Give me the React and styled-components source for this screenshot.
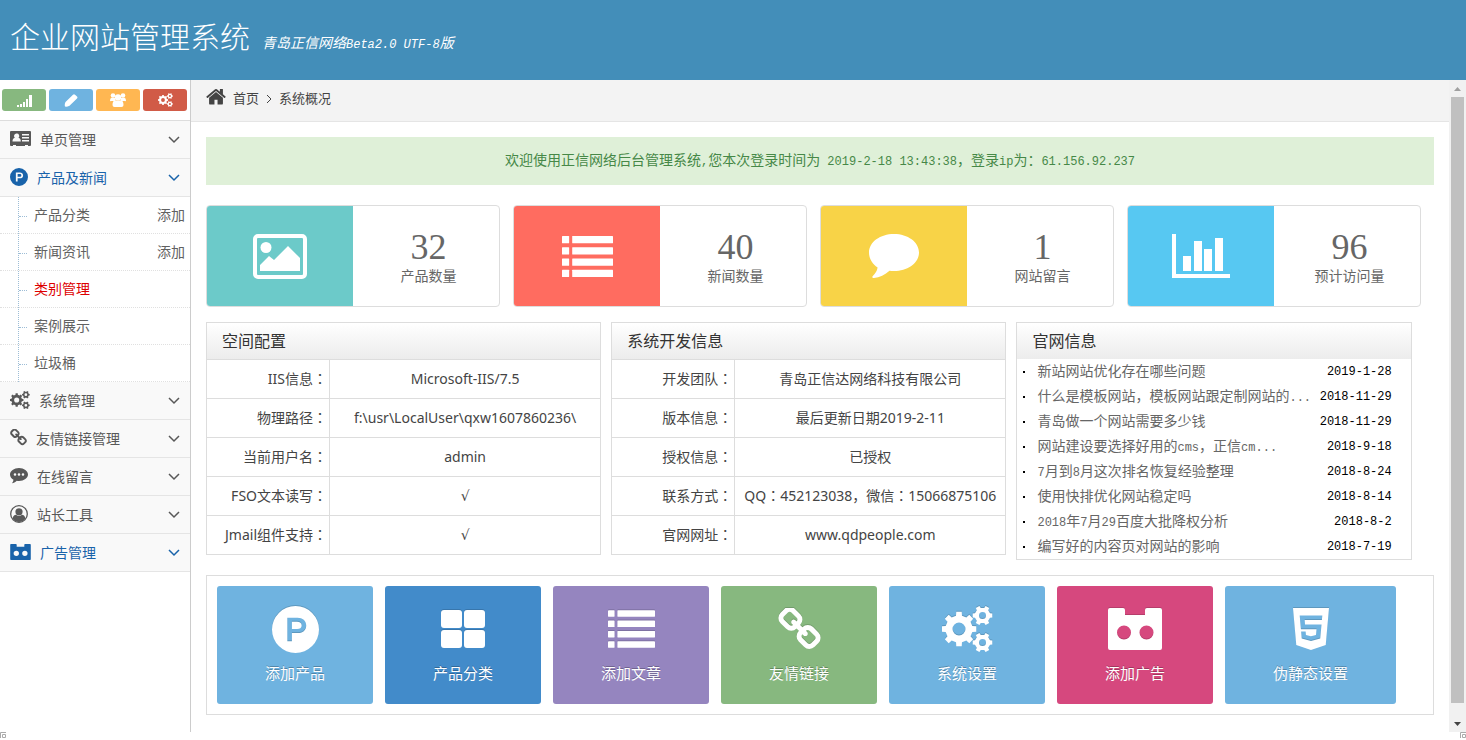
import React from "react";
import styled, { createGlobalStyle } from "styled-components";
import { FaHtml5 } from "react-icons/fa";

const song = `"Liberation Serif", "Noto Sans CJK SC", sans-serif`;
const yahei = `"Noto Sans", "Noto Sans CJK SC", sans-serif`;

const GlobalStyle = createGlobalStyle`
  *, *::before, *::after { box-sizing: border-box; }
  body {
    margin: 0;
    background: #fff;
    color: #555;
    font: 14px/20px ${song};
  }
  button { font: inherit; color: inherit; border: 0; padding: 0; background: none; cursor: pointer; }
  a { color: inherit; text-decoration: none; }
  h1, h2, p, ul, ol { margin: 0; padding: 0; font-weight: normal; list-style: none; }
  svg { display: block; }
`;

/* ---------- icons ---------- */

const Glyph = ({ w, h, vb, children }) => (
  <svg width={w} height={h} viewBox={vb} fill="currentColor" aria-hidden="true">
    {children}
  </svg>
);

/* Outline of a toothed wheel with a round hole. */
const gear = (cx, cy, r, hole, teeth, turn = 0) => {
  const step = (Math.PI * 2) / teeth;
  const points = [];
  for (let i = 0; i < teeth; i += 1) {
    [[-0.28, 0.78], [-0.2, 1], [0.2, 1], [0.28, 0.78]].forEach(([t, k]) => {
      const a = (i + t + turn) * step;
      points.push(`${(cx + Math.cos(a) * r * k).toFixed(2)} ${(cy + Math.sin(a) * r * k).toFixed(2)}`);
    });
  }
  return `M${points.join("L")}zM${cx - hole} ${cy}a${hole} ${hole} 0 1 0 ${hole * 2} 0a${hole} ${hole} 0 1 0 ${-hole * 2} 0z`;
};

const GearsIcon = ({ w, h }) => (
  <Glyph w={w} h={h} vb="0 0 51 46">
    <path fillRule="evenodd" d={gear(17, 23, 17.5, 6.5, 8) + gear(40.5, 9.5, 10, 3.5, 6) + gear(40.5, 36.5, 10, 3.5, 6)} />
  </Glyph>
);

const SignalIcon = () => (
  <Glyph w={15} h={13} vb="0 0 15 13">
    <path d="M0 11h2v2H0zM3 10h2v3H3zM6 8h2v5H6zM9 5h2v8H9zM12 1h3v12h-3z" />
  </Glyph>
);

const PencilIcon = () => (
  <Glyph w={14} h={13} vb="0 0 14 13">
    <path d="M9 .8q1-1 2 0l2 1.800q.9 1 0 2L5.500 11.800Q3 13 1 12.600.3 10.500 1.500 8z" />
  </Glyph>
);

const UsersIcon = () => (
  <Glyph w={16} h={14} vb="0 0 16 14">
    <circle cx="3" cy="2.500" r="2.300" />
    <circle cx="13" cy="2.500" r="2.300" />
    <path d="M0 7.500Q0 4.500 2 4.700L5 5v3H1.500Q0 8.500 0 7.500zM16 7.500q0-3-2-2.800L11 5v3h3.500q1.500.5 1.500-.5z" />
    <circle cx="8" cy="4.500" r="3.200" />
    <path d="M2.500 12q0-4.800 3-4.800Q8 8.800 10.500 7.200q3 0 3 4.800 0 2-2 2h-7q-2 0-2-2z" />
  </Glyph>
);

const HomeIcon = () => (
  <Glyph w={20} h={17} vb="64 180 1664 1400">
    <path d="M1472 992v480q0 26-19 45t-45 19h-384v-384h-256v384h-384q-26 0-45-19t-19-45v-480q0-1 .5-3t.5-3l575-474 575 474q1 2 1 6zm223-69l-62 74q-8 9-21 11h-3q-13 0-21-7l-692-577-692 577q-12 8-24 7-13-2-21-11l-62-74q-8-10-7-23.5t11-21.5l719-599q32-26 76-26t76 26l244 204v-195q0-14 9-23t23-9h192q14 0 23 9t9 23v408l219 182q10 8 11 21.5t-7 23.5z" />
  </Glyph>
);

const LinkIcon = ({ size }) => (
  <Glyph w={size} h={size} vb="64 64 1664 1664">
    <path d="M1520 1216q0-40-28-68l-208-208q-28-28-68-28-42 0-72 32 3 3 19 18.5t21.5 21.5 15 19 13 25.5 3.5 27.5q0 40-28 68t-68 28q-15 0-27.5-3.5t-25.5-13-19-15-21.5-21.5-18.5-19q-33 31-33 73 0 40 28 68l206 207q27 27 68 27 40 0 68-26l147-146q28-28 28-67zm-703-705q0-40-28-68l-206-207q-28-28-68-28-39 0-68 27l-147 146q-28 28-28 67 0 40 28 68l208 208q27 27 68 27 42 0 72-31-3-3-19-18.5t-21.5-21.5-15-19-13-25.5-3.5-27.5q0-40 28-68t68-28q15 0 27.5 3.5t25.5 13 19 15 21.5 21.5 18.5 19q33-31 33-73zm895 705q0 120-85 203l-147 146q-83 83-203 83-121 0-204-85l-206-207q-83-83-83-203 0-123 88-209l-88-88q-86 88-208 88-120 0-204-84l-208-208q-84-84-84-204t85-203l147-146q83-83 203-83 121 0 204 85l206 207q83 83 83 203 0 123-88 209l88 88q86-88 208-88 120 0 204 84l208 208q84 84 84 204z" />
  </Glyph>
);

const CardIcon = () => (
  <Glyph w={21} h={16} vb="0 0 21 16">
    <path
      fillRule="evenodd"
      d="M1 0h19a1 1 0 0 1 1 1v13a1 1 0 0 1-1 1h-2v-1h-3v1H6v-1H3v1H1a1 1 0 0 1-1-1V1a1 1 0 0 1 1-1zM6.500 2.500a2.500 2.500 0 0 0-1.700 4.300C3.300 7 2.500 8.500 2.500 10.500h8.300c0-2-.8-3.500-2.300-3.700A2.500 2.500 0 0 0 6.500 2.500zM12 3v1.500h7V3zM12 6v1.500h7V6zM12 9v1.500h7V9z"
    />
  </Glyph>
);

const ParkIcon = ({ size }) => (
  <Glyph w={size} h={size} vb="0 0 46 46">
    <path
      fillRule="evenodd"
      d="M23 0a23 23 0 1 1 0 46a23 23 0 0 1 0-46zM15 11.500v23h4.500v-8h5.500c5 0 8.500-2.800 8.500-7.500s-3.500-7.500-8.500-7.500zM19.500 15.500h5c2.800 0 4.500 1.200 4.500 3.500s-1.700 3.500-4.500 3.500h-5z"
    />
  </Glyph>
);

const DotsIcon = () => (
  <Glyph w={18} h={16} vb="0 0 18 16">
    <path
      fillRule="evenodd"
      d="M9 0c5 0 9 3 9 6.500S14 13 9 13c-.8 0-1.500-.1-2.200-.2C5.300 14.200 3.500 15 2 15.200c.9-1 1.400-2.200 1.500-3.500C1.300 10.500 0 8.600 0 6.500 0 3 4 0 9 0zM5 5.200a1.300 1.300 0 1 0 0 2.600a1.300 1.300 0 0 0 0-2.600zM9 5.200a1.300 1.300 0 1 0 0 2.600a1.300 1.300 0 0 0 0-2.600zM13 5.200a1.300 1.300 0 1 0 0 2.600a1.300 1.300 0 0 0 0-2.600z"
    />
  </Glyph>
);

const UserIcon = () => (
  <Glyph w={18} h={18} vb="0 0 18 18">
    <circle cx="9" cy="9" r="8.300" fill="none" stroke="currentColor" strokeWidth="1.300" />
    <circle cx="9" cy="6.800" r="3.600" />
    <path d="M2.500 13.500c.5-2.300 1.800-3.600 3.600-3.700a4.300 4.300 0 0 0 5.800 0c1.800.1 3.100 1.400 3.600 3.700A8 8 0 0 1 9 17a8 8 0 0 1-6.500-3.500z" />
  </Glyph>
);

const CameraIcon = ({ w, h }) => (
  <Glyph w={w} h={h} vb="0 0 54 42">
    <path
      fillRule="evenodd"
      d="M2 0h13q2 0 2 2v5h20V2q0-2 2-2h13q2 0 2 2v38q0 2-2 2H2q-2 0-2-2V2q0-2 2-2zM16 17.500a7 7 0 1 0 0 14a7 7 0 0 0 0-14zM38.500 17.500a7 7 0 1 0 0 14a7 7 0 0 0 0-14z"
    />
  </Glyph>
);

const ListIcon = ({ w, h }) => (
  <Glyph w={w} h={h} vb="0 0 50 40">
    {[0, 11, 22, 33].map((y) => (
      <React.Fragment key={y}>
        <rect x="0" y={y} width="7" height="7" rx="0.500" />
        <rect x="10" y={y} width="40" height="7" rx="0.500" />
      </React.Fragment>
    ))}
  </Glyph>
);

const PictureIcon = () => (
  <Glyph w={54} h={45} vb="0 0 54 45">
    <rect x="2" y="2" width="50" height="41" rx="3" fill="none" stroke="currentColor" strokeWidth="4" />
    <circle cx="13" cy="13.500" r="5.500" />
    <path d="M7 37v-6l9-9 5 4 14-14 12 12v13z" />
  </Glyph>
);

const CommentIcon = () => (
  <Glyph w={50} h={45} vb="0 0 50 45">
    <path d="M25 0c13.800 0 25 8 25 18.500S38.800 37 25 37c-1.500 0-3-.1-4.500-.3C16 41 10.500 43.300 5 44c-1.500.2-2.200-1-1.200-2C6.500 39.300 8 37 8.600 33.500 3.300 30 0 24.600 0 18.500 0 8 11.200 0 25 0z" />
  </Glyph>
);

const ChartIcon = () => (
  <Glyph w={58} h={45} vb="0 0 58 45">
    <path d="M0 0h4v40h54v4H0zM11 22h8v15h-8zM22 7h8v30h-8zM32 15h8v22h-8zM43 4h8v33h-8z" />
  </Glyph>
);

const GridIcon = () => (
  <Glyph w={44} h={38} vb="0 0 44 38">
    <rect width="21" height="18" rx="3" />
    <rect x="23" width="21" height="18" rx="3" />
    <rect y="20" width="21" height="18" rx="3" />
    <rect x="23" y="20" width="21" height="18" rx="3" />
  </Glyph>
);

const ChevronDown = () => (
  <svg width="12" height="8" viewBox="0 0 12 8" fill="none" stroke="currentColor" strokeWidth="1.500" aria-hidden="true">
    <path d="M1 1l5 5 5-5" />
  </svg>
);

const ChevronRight = () => (
  <svg width="6" height="10" viewBox="0 0 6 10" fill="none" stroke="currentColor" aria-hidden="true">
    <path d="M1 1l4 4-4 4" />
  </svg>
);

const FrameCorner = () => (
  <svg width="6" height="6" viewBox="0 0 6 6" fill="none" stroke="#aaa" aria-hidden="true">
    <path d="M0.500 6V0.500H6M2.500 5.500v-3h3v3z" />
  </svg>
);

/* ---------- text ---------- */

const Mono = styled.span`
  font-family: "Liberation Mono", monospace;
  font-size: 12px;
  line-height: 12px;
`;

/* Sets runs of Latin letters and digits in the half-width face. */
const Mixed = ({ children }) =>
  children.split(/([\x20-\x7e]+)/).map((part, i) => (i % 2 ? <Mono key={i}>{part}</Mono> : part));

/* ---------- frame ---------- */

const Page = styled.div`
  display: flex;
  flex-direction: column;
  min-height: 100vh;
`;

const Header = styled.header`
  display: flex;
  align-items: baseline;
  gap: 12px;
  height: 80px;
  padding: 18px 10px 0;
  background: #438eb9;
  color: #fff;
`;

const Title = styled.h1`
  font-size: 30px;
  line-height: 40px;
  font-weight: 300;
`;

const Version = styled.em`
  font-size: 14px;
`;

const Body = styled.div`
  display: flex;
  flex: 1;
`;

const BottomStrip = styled.footer`
  display: flex;
  justify-content: space-between;
  height: 8px;
`;

/* ---------- sidebar ---------- */

const Sidebar = styled.nav`
  flex: none;
  width: 191px;
  border-right: 1px solid #ccc;
`;

const Shortcuts = styled.div`
  display: flex;
  align-items: center;
  gap: 3px;
  height: 41px;
  padding: 0 2px;
  border-bottom: 1px solid #ddd;
`;

const Shortcut = styled.button`
  display: flex;
  align-items: center;
  justify-content: center;
  width: 44px;
  height: 22px;
  border-radius: 3px;
  background: ${(p) => p.$color};
  color: #fff;
`;

const MenuButton = styled.button`
  display: flex;
  align-items: center;
  gap: 9px;
  width: 100%;
  height: 38px;
  padding: 0 10px;
  border-bottom: 1px solid #e5e5e5;
  background: #f9f9f9;
  color: ${(p) => (p.$active ? "#1963aa" : "#585858")};
`;

const MenuIcon = styled.span`
  padding-bottom: 2px;
`;

const MenuText = styled.span`
  flex: 1;
  padding-top: 2px;
  text-align: left;
`;

const Submenu = styled.ul`
  position: relative;
  &::before {
    content: "";
    position: absolute;
    top: 0;
    bottom: 0;
    left: 18px;
    border-left: 1px dotted #9dbdd6;
  }
`;

const SubItem = styled.li`
  display: flex;
  align-items: center;
  height: 37px;
  padding: 2px 5px 0 19px;
  border-bottom: 1px dotted #e0e0e0;
  color: ${(p) => (p.$active ? "#dd0000" : "#616161")};
  &::before {
    content: "";
    width: 8px;
    margin-right: 7px;
    border-top: 1px dotted #9dbdd6;
  }
`;

const SubLink = styled.a`
  flex: 1;
`;

/* ---------- content ---------- */

const Main = styled.main`
  flex: 1;
  min-width: 0;
`;

const Breadcrumb = styled.ol`
  display: flex;
  align-items: center;
  gap: 7px;
  height: 42px;
  padding: 0 15px 4px;
  border-bottom: 1px solid #e5e5e5;
  background: #f3f3f3;
  color: #444;
  font-size: 13px;
`;

const HomeItem = styled.li`
  padding-bottom: 4px;
`;

const Content = styled.div`
  padding: 15px 15px 17px;
`;

const Alert = styled.p`
  padding: 14px;
  background: #dff0d8;
  color: #468847;
  text-align: center;
`;

const Stats = styled.div`
  display: grid;
  grid-template-columns: repeat(4, 1fr);
  gap: 13px;
  margin-top: 20px;
  padding-right: 13px;
`;

const StatCard = styled.section`
  display: grid;
  grid-template-columns: 1fr 1fr;
  height: 102px;
  overflow: hidden;
  border: 1px solid #ddd;
  border-radius: 4px;
`;

const StatIcon = styled.div`
  display: flex;
  align-items: center;
  justify-content: center;
  background: ${(p) => p.$color};
  color: #fff;
`;

const StatBody = styled.div`
  padding: 21px 0 0 5px;
  color: #666;
  text-align: center;
`;

const StatNumber = styled.p`
  font-size: 36px;
  line-height: 40px;
`;

const Panels = styled.div`
  display: flex;
  align-items: flex-start;
  gap: 10px;
  margin-top: 15px;
`;

const Panel = styled.section`
  flex: none;
  width: calc(33% - 10px);
  border: 1px solid #ddd;
`;

const PanelTitle = styled.h2`
  height: 36px;
  padding: 0 15px;
  background: linear-gradient(#fff, #ececec);
  color: #333;
  font-size: 16px;
  line-height: 38px;
`;

const InfoTable = styled.table`
  width: 100%;
  border-spacing: 0;
  font-family: ${yahei};
  color: #444;
  th, td { height: 39px; padding: 0 5px; border-top: 1px solid #ddd; white-space: nowrap; }
  th { width: 123px; padding: 0 2px; border-right: 1px solid #ddd; font-weight: normal; text-align: right; }
  td { text-align: center; }
`;

/* The traditional face centres the colon in its square. */
const Colon = styled.span`
  font-family: "Noto Sans CJK TC", sans-serif;
  line-height: 14px;
`;

const Tick = styled.span`
  font-family: "DejaVu Sans", sans-serif;
  line-height: 14px;
`;

const NewsRow = styled.li`
  display: flex;
  align-items: center;
  height: 25px;
  padding: 0 19px 0 6px;
  color: #000;
`;

const Bullet = styled.span`
  width: 2px;
  height: 2px;
  margin-right: 12px;
  background: currentColor;
`;

const NewsLink = styled.a`
  flex: 1;
  overflow: hidden;
  color: #666;
  white-space: nowrap;
`;

const Actions = styled.div`
  display: flex;
  gap: 12px;
  margin-top: 15px;
  padding: 10px;
  border: 1px solid #ddd;
`;

const ActionTile = styled.button`
  display: flex;
  flex-direction: column;
  align-items: center;
  height: 118px;
  padding: 18px 48px 0;
  border-radius: 3px;
  background: ${(p) => p.$color};
  color: #fff;
  font-size: 15px;
  text-shadow: 0 -1px 0 rgba(0, 0, 0, 0.25);
`;

const ActionIcon = styled.span`
  display: flex;
  align-items: center;
  height: 50px;
  margin-bottom: 10px;
  filter: drop-shadow(0 -1px 0 rgba(0, 0, 0, 0.15));
`;

/* ---------- scroll rail ---------- */

const Rail = styled.div`
  display: flex;
  flex: none;
  flex-direction: column;
  align-items: center;
  width: 17px;
  background: #f1f1f1;
`;

const RailArrow = styled.button`
  display: flex;
  align-items: center;
  justify-content: center;
  width: 17px;
  height: 17px;
  color: ${(p) => (p.$dim ? "#a0a0a0" : "#444")};
`;

const Thumb = styled.div`
  flex: 1;
  width: 13px;
  margin-bottom: 12px;
  background: #c0c0c0;
`;

/* ---------- data ---------- */

const shortcuts = [
  ["统计", "#87b87f", <SignalIcon />],
  ["编辑", "#6fb3e0", <PencilIcon />],
  ["用户", "#ffb752", <UsersIcon />],
  ["设置", "#d15b47", <GearsIcon w={15} h={14} />],
];

const submenu = [
  { text: "产品分类", add: true },
  { text: "新闻资讯", add: true },
  { text: "类别管理", active: true },
  { text: "案例展示" },
  { text: "垃圾桶" },
];

const menu = [
  { text: "单页管理", icon: <CardIcon /> },
  { text: "产品及新闻", icon: <ParkIcon size={18} />, active: true, children: submenu },
  { text: "系统管理", icon: <GearsIcon w={20} h={18} /> },
  { text: "友情链接管理", icon: <LinkIcon size={17} /> },
  { text: "在线留言", icon: <DotsIcon /> },
  { text: "站长工具", icon: <UserIcon /> },
  { text: "广告管理", icon: <CameraIcon w={21} h={16} />, active: true },
];

const stats = [
  ["32", "产品数量", "#6ccac9", <PictureIcon />],
  ["40", "新闻数量", "#ff6c60", <ListIcon w={51} h={41} />],
  ["1", "网站留言", "#f8d347", <CommentIcon />],
  ["96", "预计访问量", "#57c8f2", <ChartIcon />],
];

const tables = [
  {
    title: "空间配置",
    rows: [
      ["IIS信息", "Microsoft-IIS/7.5"],
      ["物理路径", "f:\\usr\\LocalUser\\qxw1607860236\\"],
      ["当前用户名", "admin"],
      ["FSO文本读写", <Tick>√</Tick>],
      ["Jmail组件支持", <Tick>√</Tick>],
    ],
  },
  {
    title: "系统开发信息",
    rows: [
      ["开发团队", "青岛正信达网络科技有限公司"],
      ["版本信息", "最后更新日期2019-2-11"],
      ["授权信息", "已授权"],
      ["联系方式", <>QQ<Colon>：</Colon>452123038，微信<Colon>：</Colon>15066875106</>],
      ["官网网址", "www.qdpeople.com"],
    ],
  },
];

const news = [
  ["新站网站优化存在哪些问题", "2019-1-28"],
  ["什么是模板网站，模板网站跟定制网站的...", "2018-11-29"],
  ["青岛做一个网站需要多少钱", "2018-11-29"],
  ["网站建设要选择好用的cms，正信cm...", "2018-9-18"],
  ["7月到8月这次排名恢复经验整理", "2018-8-24"],
  ["使用快排优化网站稳定吗", "2018-8-14"],
  ["2018年7月29百度大批降权分析", "2018-8-2"],
  ["编写好的内容页对网站的影响", "2018-7-19"],
];

const actions = [
  ["添加产品", "#6fb3e0", <ParkIcon size={47} />],
  ["产品分类", "#428bca", <GridIcon />],
  ["添加文章", "#9585bf", <ListIcon w={47} h={38} />],
  ["友情链接", "#87b87f", <LinkIcon size={43} />],
  ["系统设置", "#6fb3e0", <GearsIcon w={51} h={46} />],
  ["添加广告", "#d6487e", <CameraIcon w={54} h={42} />],
  ["伪静态设置", "#6fb3e0", <FaHtml5 size={48} />],
];

export default function App() {
  return (
    <Page>
      <GlobalStyle />
      <Header>
        <Title>企业网站管理系统</Title>
        <Version><Mixed>青岛正信网络Beta2.0 UTF-8版</Mixed></Version>
      </Header>
      <Body>
        <Sidebar>
          <Shortcuts>
            {shortcuts.map(([name, color, icon]) => (
              <Shortcut key={name} aria-label={name} $color={color}>{icon}</Shortcut>
            ))}
          </Shortcuts>
          {menu.map((item) => (
            <React.Fragment key={item.text}>
              <MenuButton $active={item.active}>
                <MenuIcon>{item.icon}</MenuIcon>
                <MenuText>{item.text}</MenuText>
                <ChevronDown />
              </MenuButton>
              {item.children && (
                <Submenu>
                  {item.children.map((sub) => (
                    <SubItem key={sub.text} $active={sub.active}>
                      <SubLink href="#">{sub.text}</SubLink>
                      {sub.add && <a href="#">添加</a>}
                    </SubItem>
                  ))}
                </Submenu>
              )}
            </React.Fragment>
          ))}
        </Sidebar>
        <Main>
          <Breadcrumb>
            <HomeItem><HomeIcon /></HomeItem>
            <li><a href="#">首页</a></li>
            <li><ChevronRight /></li>
            <li>系统概况</li>
          </Breadcrumb>
          <Content>
            <Alert>
              <Mixed>欢迎使用正信网络后台管理系统,您本次登录时间为 2019-2-18 13:43:38，登录ip为：61.156.92.237</Mixed>
            </Alert>
            <Stats>
              {stats.map(([value, label, color, icon]) => (
                <StatCard key={label}>
                  <StatIcon $color={color}>{icon}</StatIcon>
                  <StatBody>
                    <StatNumber>{value}</StatNumber>
                    <p>{label}</p>
                  </StatBody>
                </StatCard>
              ))}
            </Stats>
            <Panels>
              {tables.map(({ title, rows }) => (
                <Panel key={title}>
                  <PanelTitle>{title}</PanelTitle>
                  <InfoTable>
                    <tbody>
                      {rows.map(([name, value]) => (
                        <tr key={name}>
                          <th scope="row">{name}<Colon>：</Colon></th>
                          <td>{value}</td>
                        </tr>
                      ))}
                    </tbody>
                  </InfoTable>
                </Panel>
              ))}
              <Panel>
                <PanelTitle>官网信息</PanelTitle>
                <ul>
                  {news.map(([title, date]) => (
                    <NewsRow key={title}>
                      <Bullet />
                      <NewsLink href="#"><Mixed>{title}</Mixed></NewsLink>
                      <Mono>{date}</Mono>
                    </NewsRow>
                  ))}
                </ul>
              </Panel>
            </Panels>
            <Actions>
              {actions.map(([label, color, icon]) => (
                <ActionTile key={label} $color={color}>
                  <ActionIcon>{icon}</ActionIcon>
                  {label}
                </ActionTile>
              ))}
            </Actions>
          </Content>
        </Main>
        <Rail>
          <RailArrow aria-label="向上滚动" $dim>
            <Glyph w={7} h={4} vb="0 0 7 4"><path d="M0 4l3.500-4L7 4z" /></Glyph>
          </RailArrow>
          <Thumb />
          <RailArrow aria-label="向下滚动">
            <Glyph w={7} h={4} vb="0 0 7 4"><path d="M0 0h7L3.500 4z" /></Glyph>
          </RailArrow>
        </Rail>
      </Body>
      <BottomStrip>
        <FrameCorner />
        <FrameCorner />
      </BottomStrip>
    </Page>
  );
}
